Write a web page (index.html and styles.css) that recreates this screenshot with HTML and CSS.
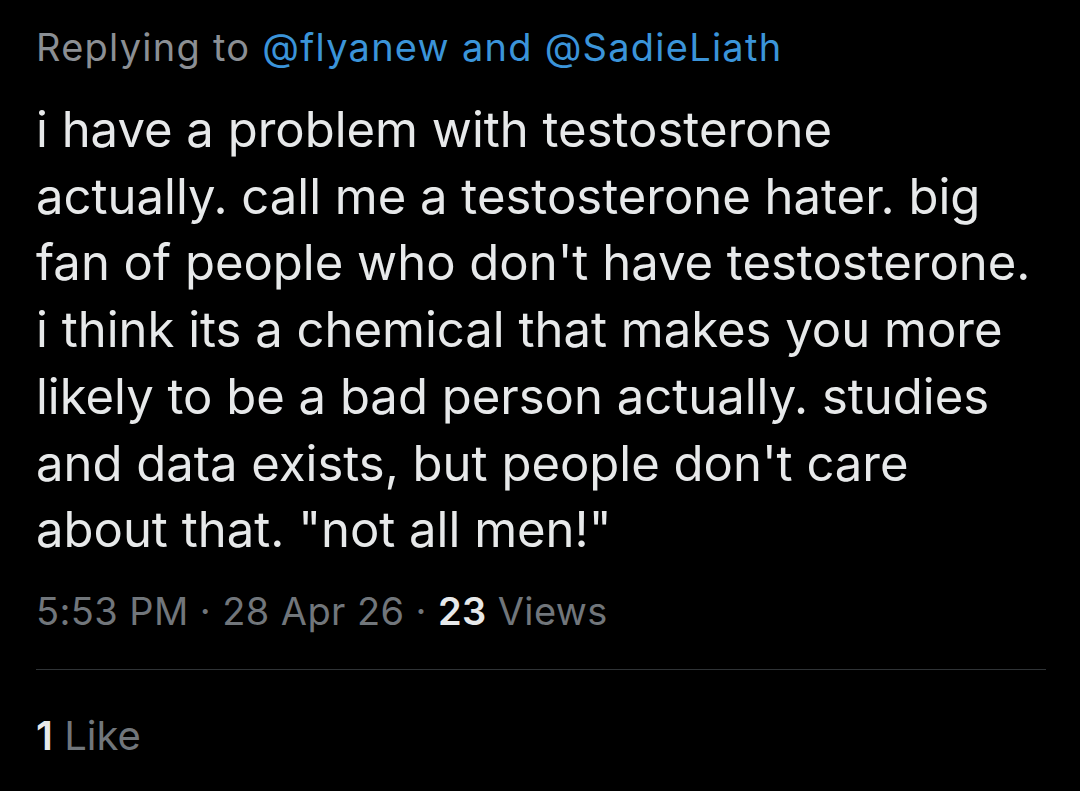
FILE: index.html
```html
<!DOCTYPE html>
<html>
<head>
<meta charset="utf-8">
<link rel="stylesheet" href="styles.css">
</head>
<body>
<div class="tweet">
  <div class="reply">Replying to <span class="link">@flyanew</span> <span class="link">and</span> <span class="link">@SadieLiath</span></div>
  <div class="text">i have a problem with testosterone<br>actually. call me a testosterone hater. big<br>fan of people who don't have testosterone.<br>i think its a chemical that makes you more<br>likely to be a bad person actually. studies<br>and data exists, but people don't care<br>about that. "not all men!"</div>
  <div class="meta">5:53 PM · 28 Apr 26 · <b>23</b> Views</div>
  <div class="divider"></div>
  <div class="likes"><b>1</b> Like</div>
</div>
</body>
</html>
```
FILE: styles.css
```css
html, body {
  margin: 0;
  padding: 0;
  background: #000;
}
body {
  width: 1080px;
  height: 791px;
  overflow: hidden;
  font-family: "Inter", "Roboto", sans-serif;
}
.tweet {
  padding: 22px 34px 0 36px;
}
.reply {
  font-size: 38px;
  line-height: 50px;
  color: #8b8f94;
  letter-spacing: 1.25px;
  white-space: nowrap;
}
.link {
  color: #3b94d9;
}
.text {
  margin-top: 25px;
  font-size: 49px;
  line-height: 66.7px;
  color: #e7e9ea;
  white-space: nowrap;
}
.meta {
  margin-top: 22px;
  font-size: 38px;
  line-height: 50px;
  color: #71767b;
  letter-spacing: 0.4px;
}
.meta b, .likes b {
  color: #e7e9ea;
  font-weight: 600;
}
.divider {
  margin-top: 33px;
  height: 1px;
  background: #2f3336;
}
.likes {
  margin-top: 41px;
  font-size: 40px;
  line-height: 50px;
  color: #71767b;
}
```
